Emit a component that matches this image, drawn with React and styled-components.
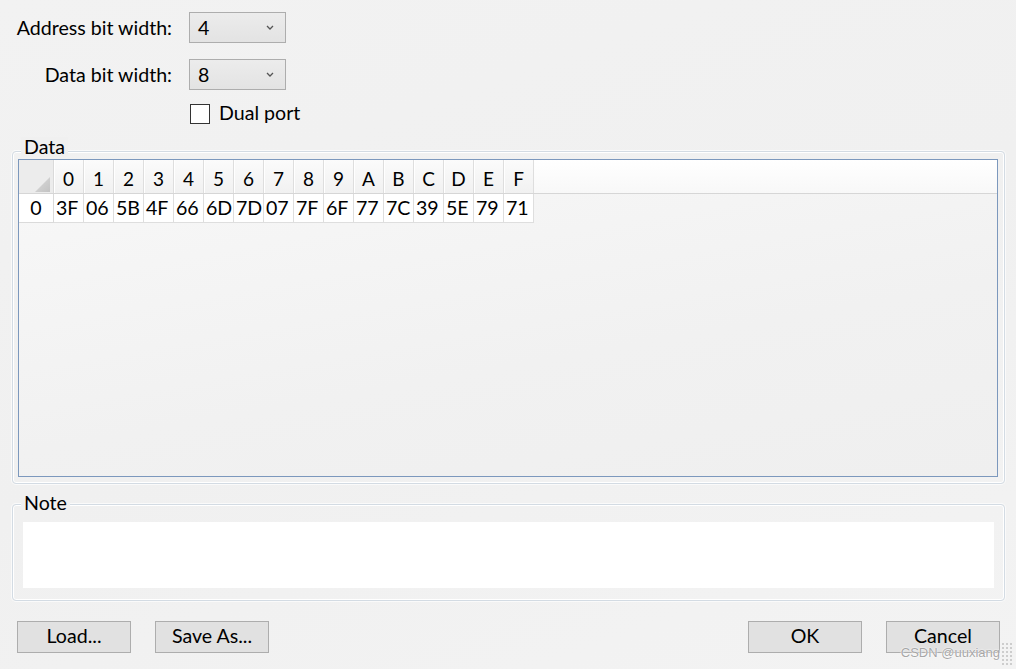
import styled, { createGlobalStyle } from 'styled-components';

const GlobalStyle = createGlobalStyle`
  html, body {
    margin: 0;
    padding: 0;
  }
  body {
    font-family: Lato, "Liberation Sans", sans-serif;
    color: #000;
    background: #f0f0f0;
  }
`;

const columns = ['0', '1', '2', '3', '4', '5', '6', '7', '8', '9', 'A', 'B', 'C', 'D', 'E', 'F'];
const values = ['3F', '06', '5B', '4F', '66', '6D', '7D', '07', '7F', '6F', '77', '7C', '39', '5E', '79', '71'];

function Chevron() {
  return (
    <svg width="8" height="5" viewBox="0 0 8 5">
      <path d="M1 1 L4 4 L7 1" fill="none" stroke="#555" strokeWidth="1.3" />
    </svg>
  );
}

function CornerMark() {
  return (
    <svg width="15" height="15" viewBox="0 0 15 15">
      <defs>
        <linearGradient id="cornerFill" x1="0" y1="0" x2="1" y2="1">
          <stop offset="0" stopColor="#dcdcdc" />
          <stop offset="1" stopColor="#c2c2c2" />
        </linearGradient>
      </defs>
      <polygon points="15,0 15,15 0,15" fill="url(#cornerFill)" />
    </svg>
  );
}

export default function App() {
  return (
    <>
      <GlobalStyle />
      <Window>
        <Form>
          <FieldRow>
            <FieldLabel>Address bit width:</FieldLabel>
            <Combo>
              <span>4</span>
              <Chevron />
            </Combo>
          </FieldRow>
          <FieldRow $gap={16}>
            <FieldLabel>Data bit width:</FieldLabel>
            <Combo>
              <span>8</span>
              <Chevron />
            </Combo>
          </FieldRow>
          <CheckRow>
            <CheckBox />
            <CheckLabel>Dual port</CheckLabel>
          </CheckRow>
        </Form>

        <GroupBox $top={27} $pad="7px 6px 6px 5px">
          <Legend $top={-15}>Data</Legend>
          <TableFrame>
            <HeaderRow>
              <CornerCell>
                <CornerMark />
              </CornerCell>
              {columns.map((c) => (
                <HeaderCell key={c}>{c}</HeaderCell>
              ))}
            </HeaderRow>
            <DataRow>
              <RowHeader>0</RowHeader>
              {values.map((v, i) => (
                <Cell key={i}>{v}</Cell>
              ))}
            </DataRow>
          </TableFrame>
        </GroupBox>

        <GroupBox $top={20} $pad="17px 10px 12px 10px">
          <Legend $top={-12}>Note</Legend>
          <NoteArea />
        </GroupBox>

        <ButtonBar>
          <ButtonGroup>
            <Button>Load...</Button>
            <Button>Save As...</Button>
          </ButtonGroup>
          <ButtonGroup>
            <Button>OK</Button>
            <Button>Cancel</Button>
          </ButtonGroup>
        </ButtonBar>

        <Watermark>CSDN @uuxiang</Watermark>
        <Grip />
      </Window>
    </>
  );
}

const Window = styled.div`
  position: relative;
  box-sizing: border-box;
  width: 1016px;
  height: 669px;
  overflow: hidden;
  padding: 12px 11px 0 12px;
  background: linear-gradient(160deg, #f2f2f2 0%, #f0f0f0 50%, #f3f3f3 100%);
  font-size: 19.6px;
`;

const Form = styled.div`
  display: flex;
  flex-direction: column;
`;

const FieldRow = styled.div`
  display: flex;
  align-items: center;
  height: 31px;
  margin-top: ${(p) => p.$gap || 0}px;
`;

const FieldLabel = styled.div`
  box-sizing: border-box;
  width: 177px;
  padding: 0 17px 1px 0;
  text-align: right;
  white-space: nowrap;
`;

const Combo = styled.div`
  box-sizing: border-box;
  width: 97px;
  height: 31px;
  display: flex;
  align-items: center;
  justify-content: space-between;
  padding: 0 11px 1px 8px;
  border: 1px solid #adadad;
  background: linear-gradient(#ececec, #e3e3e3);
`;

const CheckRow = styled.div`
  display: flex;
  align-items: center;
  gap: 9px;
  height: 20px;
  margin: 14px 0 0 178px;
`;

const CheckBox = styled.div`
  box-sizing: border-box;
  width: 20px;
  height: 20px;
  border: 1px solid #333;
  background: #fff;
`;

const CheckLabel = styled.span`
  line-height: 20px;
  padding-bottom: 2px;
`;

const GroupBox = styled.div`
  position: relative;
  margin-top: ${(p) => p.$top}px;
  padding: ${(p) => p.$pad};
  border: 1px solid #d3dbe3;
  border-radius: 4px;
  box-shadow: inset 0 0 0 1px #fff, 0 0 0 1px #fafafa;
`;

const Legend = styled.span`
  position: absolute;
  top: ${(p) => p.$top}px;
  left: 8px;
  padding: 0 3px;
  line-height: 20px;
  background: #f0f0f0;
`;

const TableFrame = styled.div`
  box-sizing: border-box;
  height: 318px;
  border: 1px solid #7c98bd;
  background: linear-gradient(170deg, #f8f8f8 0%, #f1f1f1 60%, #efefef 100%);
`;

const HeaderRow = styled.div`
  display: flex;
  height: 34px;
  border-bottom: 1px solid #d6d6d6;
  box-sizing: border-box;
  background: linear-gradient(#ffffff, #f8f8f8);
`;

const CornerCell = styled.div`
  box-sizing: border-box;
  width: 35px;
  display: flex;
  align-items: flex-end;
  justify-content: flex-end;
  padding: 0 3px 1px 0;
  background: #ececec;
  border-right: 1px solid #dadada;
`;

const HeaderCell = styled.div`
  box-sizing: border-box;
  width: 30px;
  padding-top: 4px;
  text-align: center;
  font-size: 19px;
  line-height: 30px;
  background: linear-gradient(#fbfbfb, #f1f1f1);
  border-right: 1px solid #dedede;
  box-shadow: inset 1px 0 #ffffff;
`;

const DataRow = styled.div`
  display: flex;
  height: 29px;
`;

const RowHeader = styled.div`
  box-sizing: border-box;
  width: 35px;
  text-align: center;
  line-height: 28px;
  background: #fff;
  border-right: 1px solid #dadada;
  border-bottom: 1px solid #dadada;
`;

const Cell = styled.div`
  box-sizing: border-box;
  width: 30px;
  padding-left: 2px;
  line-height: 28px;
  white-space: nowrap;
  overflow: hidden;
  background: #fff;
  border-right: 1px solid #dedede;
  border-bottom: 1px solid #dedede;
`;

const NoteArea = styled.div`
  height: 66px;
  background: #fff;
`;

const ButtonBar = styled.div`
  display: flex;
  justify-content: space-between;
  margin-top: 20px;
  padding: 0 5px 0 5px;
`;

const ButtonGroup = styled.div`
  display: flex;
  gap: 24px;
`;

const Button = styled.button`
  box-sizing: border-box;
  width: 114px;
  height: 32px;
  padding: 0 0 3px;
  border: 1px solid #adadad;
  background: #e1e1e1;
  font-family: inherit;
  font-size: 19.6px;
  color: #000;
  line-height: 26px;
`;

const Watermark = styled.div`
  position: absolute;
  right: 16px;
  bottom: 9px;
  font-family: "Liberation Sans", Arial, sans-serif;
  font-size: 13px;
  line-height: 14px;
  color: rgba(150, 150, 150, 0.85);
  text-shadow: 0 0 2px #fff, 0 0 1px #fff;
`;

const Grip = styled.div`
  position: absolute;
  right: 3px;
  bottom: 3px;
  width: 12px;
  height: 24px;
  background-image: radial-gradient(circle, #c4c4c4 1px, transparent 1.3px);
  background-size: 4px 4px;
  opacity: 0.8;
`;
